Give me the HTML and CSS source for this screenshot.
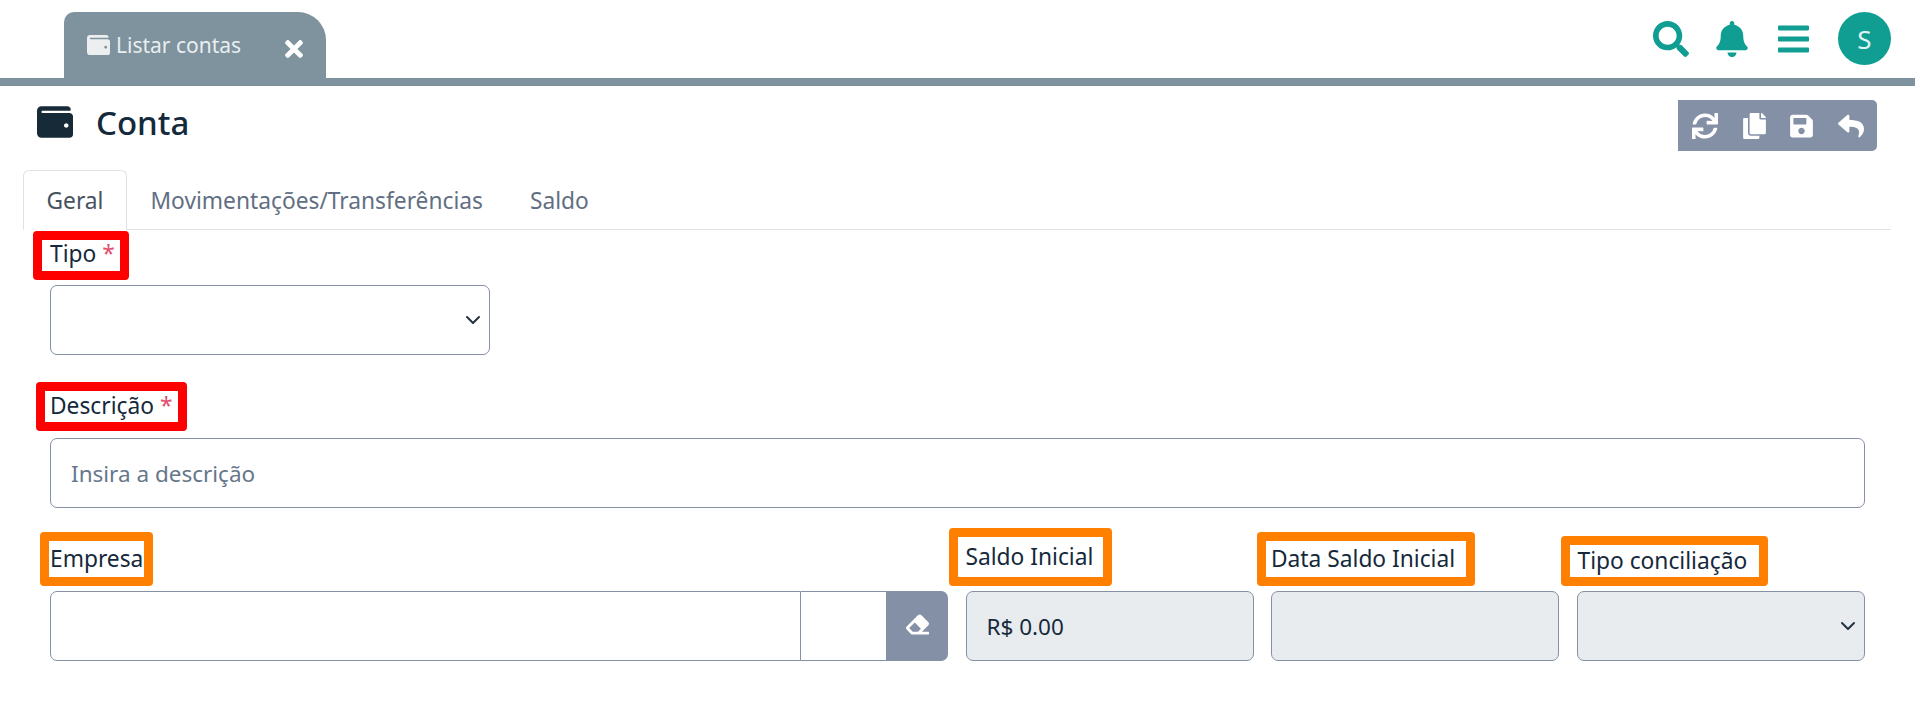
FILE: index.html
```html
<!DOCTYPE html>
<html lang="pt-BR">
<head>
    <meta charset="UTF-8">
    <title>Conta</title>
    <link rel="stylesheet" href="styles.css">
</head>
<body>
    <header class="topbar">
        <div class="open-tab">
            <svg class="open-tab-icon" viewBox="0 0 512 512"><path d="M461.2 128H80c-8.84 0-16-7.16-16-16s7.16-16 16-16h384c8.84 0 16-7.16 16-16 0-26.51-21.49-48-48-48H64C28.65 32 0 60.65 0 96v320c0 35.35 28.65 64 64 64h397.2c28.02 0 50.8-21.53 50.8-48V176c0-26.47-22.78-48-50.8-48zM416 336c-17.67 0-32-14.33-32-32s14.33-32 32-32 32 14.33 32 32-14.33 32-32 32z"/></svg>
            <span class="open-tab-text">Listar contas</span>
            <svg class="open-tab-close" viewBox="0 0 352 512"><path d="M242.72 256l100.07-100.07c12.28-12.28 12.28-32.19 0-44.48l-22.24-22.24c-12.28-12.28-32.19-12.28-44.48 0L176 189.28 75.93 89.21c-12.28-12.28-32.19-12.28-44.48 0L9.21 111.45c-12.28 12.28-12.28 32.19 0 44.48L109.28 256 9.21 356.07c-12.28 12.28-12.28 32.19 0 44.48l22.24 22.24c12.28 12.28 32.2 12.28 44.48 0L176 322.72l100.07 100.07c12.28 12.28 32.2 12.28 44.48 0l22.24-22.24c12.28-12.28 12.28-32.19 0-44.48L242.72 256z"/></svg>
        </div>
        <div class="top-actions">
            <svg class="top-search" viewBox="0 0 512 512"><path d="M505 442.7L405.3 343c-4.5-4.5-10.6-7-17-7H372c27.6-35.3 44-79.7 44-128C416 93.1 322.9 0 208 0S0 93.1 0 208s93.1 208 208 208c48.3 0 92.7-16.4 128-44v16.3c0 6.4 2.5 12.5 7 17l99.7 99.7c9.4 9.4 24.6 9.4 33.9 0l28.3-28.3c9.4-9.4 9.4-24.6.1-34zM208 336c-70.7 0-128-57.2-128-128 0-70.7 57.2-128 128-128 70.7 0 128 57.2 128 128 0 70.7-57.2 128-128 128z"/></svg>
            <svg class="top-bell" viewBox="0 0 448 512"><path d="M224 512c35.32 0 63.97-28.65 63.97-64H160.03c0 35.35 28.65 64 63.97 64zm215.39-149.71c-19.32-20.76-55.47-51.99-55.47-154.29 0-77.7-54.48-139.9-127.94-155.16V32c0-17.67-14.32-32-31.98-32s-31.98 14.33-31.98 32v20.84C118.56 68.1 64.08 130.3 64.08 208c0 102.3-36.15 133.53-55.47 154.29-6 6.45-8.66 14.16-8.61 21.71.11 16.4 12.98 32 32.1 32h383.8c19.12 0 32-15.6 32.1-32 .05-7.55-2.61-15.27-8.61-21.71z"/></svg>
            <svg class="top-bars" viewBox="0 0 448 512"><path d="M16 132h416c8.837 0 16-7.163 16-16V76c0-8.837-7.163-16-16-16H16C7.163 60 0 67.163 0 76v40c0 8.837 7.163 16 16 16zm0 160h416c8.837 0 16-7.163 16-16v-40c0-8.837-7.163-16-16-16H16c-8.837 0-16 7.163-16 16v40c0 8.837 7.163 16 16 16zm0 160h416c8.837 0 16-7.163 16-16v-40c0-8.837-7.163-16-16-16H16c-8.837 0-16 7.163-16 16v40c0 8.837 7.163 16 16 16z"/></svg>
            <div class="avatar">S</div>
        </div>
    </header>

    <div class="title-row">
        <h1 class="page-title">
            <svg class="page-title-icon" viewBox="0 0 512 512"><path d="M461.2 128H80c-8.84 0-16-7.16-16-16s7.16-16 16-16h384c8.84 0 16-7.16 16-16 0-26.51-21.49-48-48-48H64C28.65 32 0 60.65 0 96v320c0 35.35 28.65 64 64 64h397.2c28.02 0 50.8-21.53 50.8-48V176c0-26.47-22.78-48-50.8-48zM416 336c-17.67 0-32-14.33-32-32s14.33-32 32-32 32 14.33 32 32-14.33 32-32 32z"/></svg>
            Conta
        </h1>
        <div class="toolbar">
            <svg viewBox="0 0 512 512"><path d="M440.65 12.57l4 82.77A247.16 247.16 0 0 0 255.83 8C134.73 8 33.91 94.92 12.29 209.82A12 12 0 0 0 24.09 224h49.05a12 12 0 0 0 11.67-9.26 175.91 175.91 0 0 1 317-56.94l-101.46-4.86a12 12 0 0 0-12.57 12v47.41a12 12 0 0 0 12 12H500a12 12 0 0 0 12-12V12a12 12 0 0 0-12-12h-47.37a12 12 0 0 0-11.98 12.57zM255.83 432a175.61 175.61 0 0 1-146-77.8l101.8 4.87a12 12 0 0 0 12.57-12v-47.4a12 12 0 0 0-12-12H12a12 12 0 0 0-12 12V500a12 12 0 0 0 12 12h47.35a12 12 0 0 0 12-12.6l-4.15-82.57A247.17 247.17 0 0 0 255.83 504c121.11 0 221.93-86.92 243.55-201.82a12 12 0 0 0-11.8-14.18h-49.05a12 12 0 0 0-11.67 9.26A175.86 175.86 0 0 1 255.83 432z"/></svg>
            <svg class="tool-narrow" viewBox="0 0 448 512"><path d="M320 448v40c0 13.255-10.745 24-24 24H24c-13.255 0-24-10.745-24-24V120c0-13.255 10.745-24 24-24h72v296c0 30.879 25.121 56 56 56h168zm0-344V0H152c-13.255 0-24 10.745-24 24v368c0 13.255 10.745 24 24 24h272c13.255 0 24-10.745 24-24V128H344c-13.2 0-24-10.8-24-24zm120.971-31.029L375.029 7.029A24 24 0 0 0 358.059 0H352v96h96v-6.059a24 24 0 0 0-7.029-16.97z"/></svg>
            <svg class="tool-narrow" viewBox="0 0 448 512"><path d="M433.941 129.941l-83.882-83.882A48 48 0 0 0 316.118 32H48C21.49 32 0 53.49 0 80v352c0 26.51 21.49 48 48 48h352c26.51 0 48-21.49 48-48V163.882a48 48 0 0 0-14.059-33.941zM224 416c-35.346 0-64-28.654-64-64 0-35.346 28.654-64 64-64s64 28.654 64 64c0 35.346-28.654 64-64 64zm96-304.52V212c0 6.627-5.373 12-12 12H76c-6.627 0-12-5.373-12-12V108c0-6.627 5.373-12 12-12h228.52c3.183 0 6.235 1.264 8.485 3.515l3.48 3.48A11.996 11.996 0 0 1 320 111.48z"/></svg>
            <svg viewBox="0 0 512 512"><path d="M8.309 189.836L184.313 37.851C199.719 24.546 224 35.347 224 56.015v80.053c160.629 1.839 288 34.032 288 186.258 0 61.441-39.581 122.309-83.333 154.132-13.653 9.931-33.111-2.533-28.077-18.631 45.344-145.012-21.507-183.51-176.59-185.742V360c0 20.7-24.3 31.453-39.687 18.164l-176.004-152c-11.071-9.562-11.086-26.753 0-36.328z"/></svg>
        </div>
    </div>

    <nav class="tabs">
        <span class="tab tab-active">Geral</span>
        <span class="tab">Movimentações/Transferências</span>
        <span class="tab">Saldo</span>
    </nav>

    <form class="form">
        <div class="field field-tipo">
            <label class="mark mark-red mark-tipo">Tipo <span class="req">*</span></label>
            <select class="control control-select"></select>
        </div>

        <div class="field field-descricao">
            <label class="mark mark-red mark-descricao">Descrição <span class="req">*</span></label>
            <input class="control" type="text" placeholder="Insira a descrição">
        </div>

        <div class="form-row">
            <div class="field">
                <label class="mark mark-orange mark-empresa">Empresa</label>
                <div class="input-group">
                    <input class="control group-main" type="text">
                    <input class="control group-code" type="text">
                    <button class="group-btn" type="button">
                        <svg viewBox="0 0 512 512"><path d="M497.941 273.941c18.745-18.745 18.745-49.137 0-67.882l-160-160c-18.745-18.745-49.136-18.746-67.883 0l-256 256c-18.745 18.745-18.745 49.137 0 67.882l96 96A48.004 48.004 0 0 0 144 480h356c6.627 0 12-5.373 12-12v-40c0-6.627-5.373-12-12-12H355.883l142.058-142.059zm-302.627-62.627l137.373 137.373L265.373 416H150.628l-80-80 124.686-124.686z"/></svg>
                    </button>
                </div>
            </div>
            <div class="field">
                <label class="mark mark-orange mark-saldo">Saldo Inicial</label>
                <input class="control" type="text" value="R$ 0.00" disabled>
            </div>
            <div class="field">
                <label class="mark mark-orange mark-data">Data Saldo Inicial</label>
                <input class="control" type="text" disabled>
            </div>
            <div class="field">
                <label class="mark mark-orange mark-conciliacao">Tipo conciliação</label>
                <select class="control control-select" disabled></select>
            </div>
        </div>
    </form>
</body>
</html>
```

FILE: styles.css
```css
* {
    box-sizing: border-box;
}

body {
    margin: 0;
    background-color: #fff;
    color: #14293b;
    font-family: "Noto Sans", "Open Sans", sans-serif;
    font-size: 22.75px;
    overflow: hidden;
}

/* top bar */
.topbar {
    display: flex;
    justify-content: space-between;
    height: 86px;
    border-bottom: 8px solid #7f939e;
}

.open-tab {
    display: flex;
    align-items: center;
    width: 262px;
    margin: 12px 0 0 64px;
    padding: 0 23px 0 23px;
    background-color: #7f939e;
    border-radius: 10px 28px 0 0;
    color: #e9eef0;
    font-size: 21px;
}

.open-tab-icon {
    width: 23px;
    height: 26px;
    fill: #eceeef;
}

.open-tab-text {
    flex: 1;
    margin-left: 6px;
    white-space: nowrap;
}

.open-tab-close {
    width: 18px;
    height: 26px;
    margin-top: 8px;
    fill: #fff;
}

.top-actions {
    display: flex;
    align-items: center;
    padding: 12px 24px 13px 0;
}

.top-actions svg {
    fill: #109e92;
}

.top-search {
    width: 36px;
    height: 36px;
}

.top-bell {
    width: 32px;
    height: 36px;
    margin-left: 27px;
}

.top-bars {
    width: 31px;
    height: 36px;
    margin-left: 30px;
}

.avatar {
    display: flex;
    align-items: center;
    justify-content: center;
    width: 53px;
    height: 53px;
    margin-left: 29px;
    border-radius: 50%;
    background-color: #109e92;
    color: #dff3f1;
    font-size: 26px;
}

/* title */
.title-row {
    display: flex;
    justify-content: space-between;
    align-items: flex-start;
    height: 84px;
    padding: 14px 38px 0 37px;
}

.page-title {
    display: flex;
    align-items: center;
    gap: 23px;
    margin: 0;
    height: 44px;
    font-size: 33px;
    font-weight: 500;
    color: #14293b;
}

.page-title-icon {
    width: 36px;
    height: 38px;
    fill: #162a38;
}

.toolbar {
    display: flex;
    align-items: center;
    gap: 24.5px;
    width: 199px;
    height: 51px;
    padding: 0 13px 0 14px;
    background-color: #8490a6;
    border-radius: 0 5px 5px 0;
}

.toolbar svg {
    width: 26px;
    height: 26px;
    fill: #fff;
}

.toolbar .tool-narrow {
    width: 23px;
}

/* tabs */
.tabs {
    display: flex;
    margin: 0 24px 0 23px;
    height: 60px;
    border-bottom: 1px solid #dee2e6;
}

.tab {
    display: flex;
    align-items: center;
    padding: 0 22.5px;
    color: #626f82;
    border: 1px solid transparent;
    border-radius: 6px 6px 0 0;
    margin-bottom: -1px;
}

.tab-active {
    color: #47535f;
    background-color: #fff;
    border-color: #dee2e6 #dee2e6 #fff;
}

/* form */
.form {
    padding: 1px 50px 0;
}

.field {
    display: flex;
    flex-direction: column;
    align-items: flex-start;
    justify-content: flex-end;
    min-width: 0;
}

.field-descricao {
    margin-top: 27px;
}

.field-tipo .control {
    width: 440px;
}

.form-row {
    display: grid;
    grid-template-columns: 898px 288px 288px 1fr;
    column-gap: 17.5px;
    margin-top: 20px;
}

.mark {
    display: block;
    line-height: 31px;
    border-style: solid;
    border-width: 9px;
    border-radius: 4px;
    white-space: nowrap;
}

.mark-red {
    border-color: #f00;
    margin-bottom: 5px;
}

.mark-orange {
    border-color: #ff7f00;
    margin-bottom: 5px;
}

.mark-tipo {
    margin-left: -17px;
    padding: 0 5px 3px 8px;
    line-height: 28px;
}

.mark-descricao {
    margin-left: -14px;
    margin-bottom: 7px;
    padding: 0 6px 1px 5px;
    line-height: 30px;
}

.mark-empresa {
    margin-left: -10px;
    padding: 2px 1px 3px 1px;
}

.mark-saldo {
    margin-left: -17px;
    padding: 4px 10px 5px 8px;
}

.mark-data {
    margin-left: -14px;
    padding: 2px 11px 3px 5px;
}

.mark-conciliacao {
    margin-left: -16px;
    padding: 0 12px 1px 8px;
}

.req {
    color: #e0506e;
}

.control {
    display: block;
    width: 100%;
    height: 70px;
    padding: 0 20px;
    background-color: #fff;
    border: 1px solid #8490a6;
    border-radius: 7px;
    color: #14293b;
    font-family: inherit;
    font-size: 22.5px;
}

.control::placeholder {
    color: #66778a;
}

.control:disabled {
    background-color: #e9ecef;
    opacity: 1;
}

.control-select {
    appearance: none;
    background-image: url("data:image/svg+xml,%3csvg xmlns='http://www.w3.org/2000/svg' viewBox='0 0 16 16'%3e%3cpath fill='none' stroke='%23243340' stroke-linecap='round' stroke-linejoin='round' stroke-width='2' d='M2 5l6 6 6-6'/%3e%3c/svg%3e");
    background-repeat: no-repeat;
    background-position: right 6px center;
    background-size: 20px 16px;
}

.input-group {
    display: flex;
    width: 100%;
}

.group-main {
    width: 751px;
    border-radius: 7px 0 0 7px;
}

.group-code {
    width: 85px;
    border-left: 0;
    border-right: 0;
    border-radius: 0;
}

.group-btn {
    width: 62px;
    height: 70px;
    padding: 0;
    background-color: #8490a6;
    border: 0;
    border-radius: 0 7px 7px 0;
}

.group-btn svg {
    width: 23px;
    height: 23px;
    fill: #fff;
}
```
